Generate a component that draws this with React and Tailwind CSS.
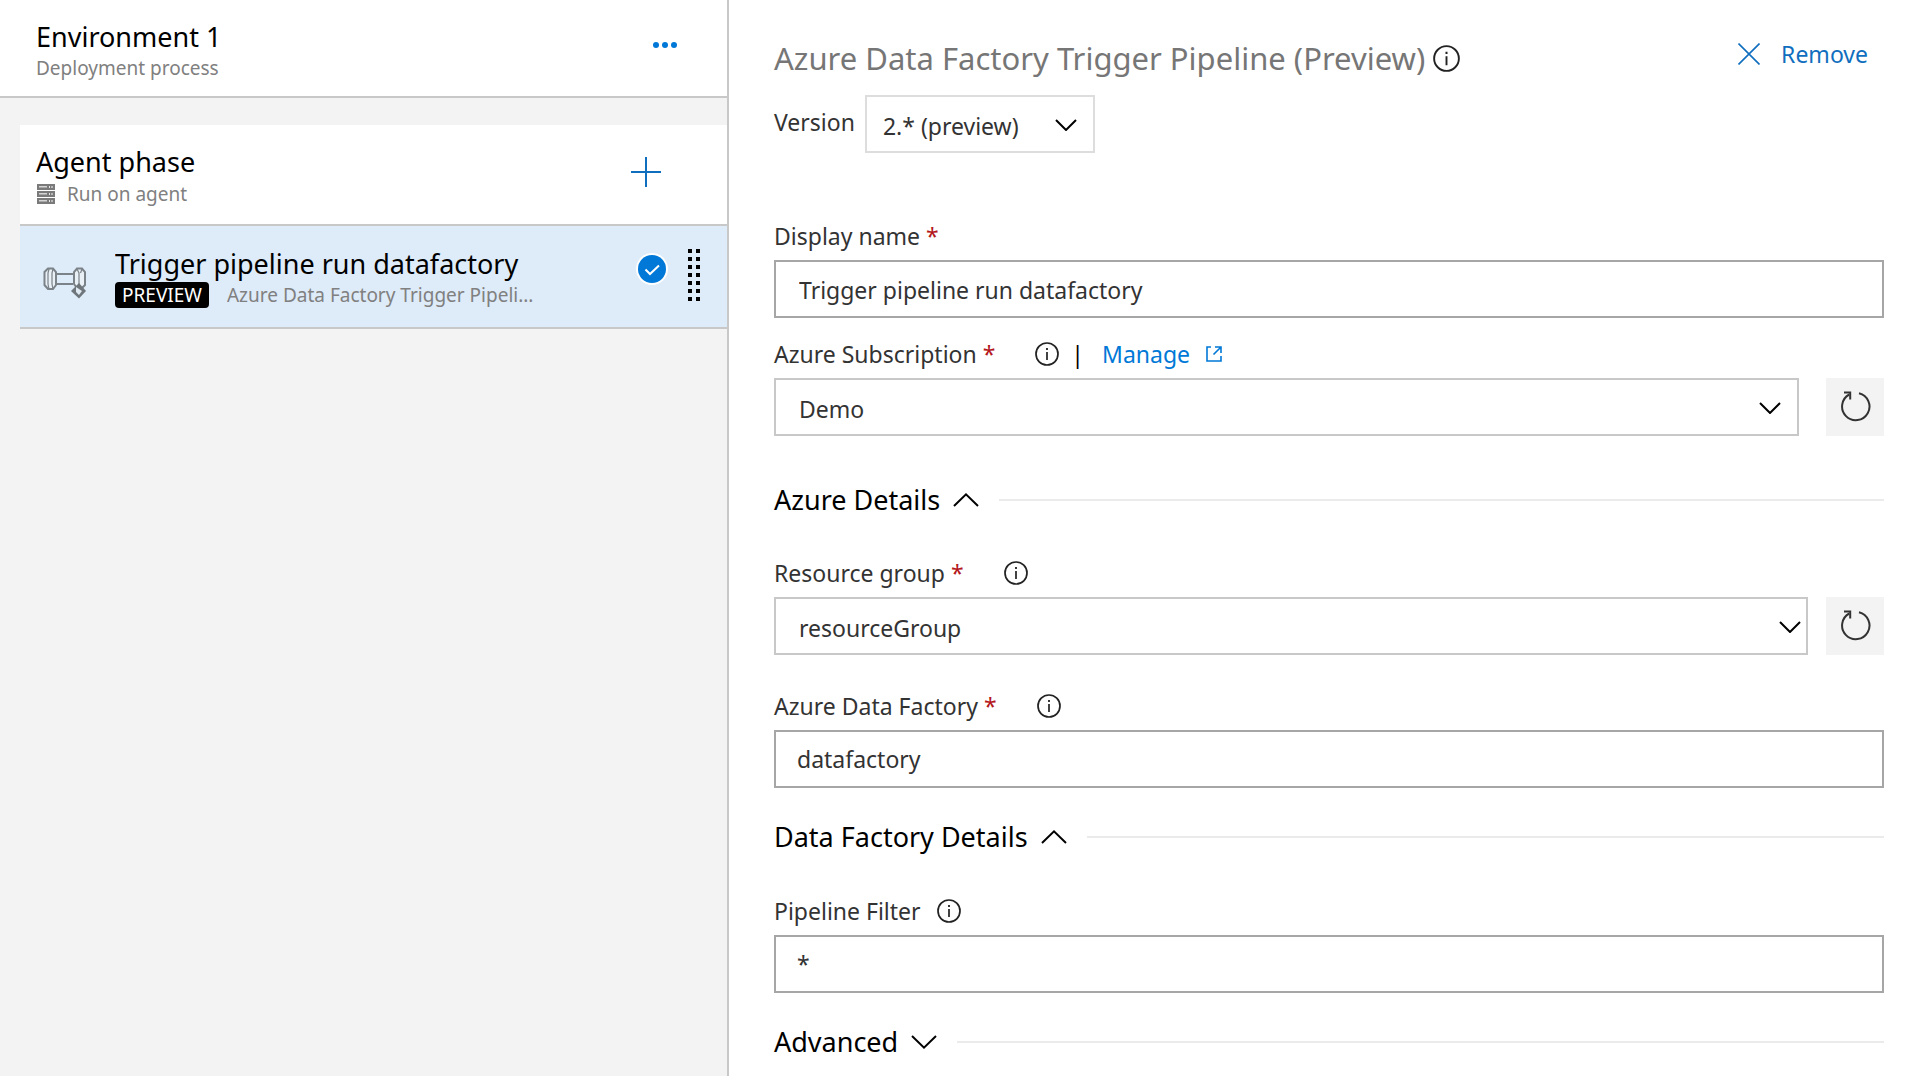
import React, { useState } from "react";

function ChevronDown({ className }) {
  return (
    <svg viewBox="0 0 22 12" fill="none" stroke="currentColor" strokeWidth="2" className={className} aria-hidden="true">
      <path d="M1 1 L11 11 L21 1" />
    </svg>
  );
}

function InfoButton({ label, large }) {
  return (
    <button type="button" aria-label={label} className="shrink-0 text-[#222222]">
      <svg viewBox="0 0 24 24" fill="none" stroke="currentColor" className={large ? "block size-[27px]" : "block size-6"} aria-hidden="true">
        <circle cx="12" cy="12" r="11" strokeWidth="1.7" />
        <path d="M12 10v8" strokeWidth="1.7" />
        <path d="M12 6v2" strokeWidth="1.8" />
      </svg>
    </button>
  );
}

function FieldLabel({ htmlFor, text, required, info, children }) {
  return (
    <div className="mb-2 flex items-center text-[23px] leading-8">
      <label htmlFor={htmlFor}>
        {text}
        {required && <span className="text-[#b4181c]"> *</span>}
      </label>
      {info && (
        <div className={required ? "ml-10 flex" : "ml-4 flex"}>
          <InfoButton label={"About " + text} />
        </div>
      )}
      {children}
    </div>
  );
}

function TextField({ id, value, indented }) {
  const [text, setText] = useState(value);
  return (
    <input
      id={id}
      type="text"
      value={text}
      onChange={(e) => setText(e.target.value)}
      className={
        "block h-[58px] w-full border-2 border-[#a6a6a6] bg-white pr-5 text-[23px] leading-8 text-[#333333] outline-none " +
        (indented ? "pl-[23px] pt-0.5" : "pl-[21px]")
      }
    />
  );
}

function SelectField({ id, value, chevron, tone, className }) {
  return (
    <div className={"relative " + className}>
      <select
        id={id}
        defaultValue={value}
        className={"block h-[58px] w-full appearance-none border-2 bg-white pt-1 text-[23px] leading-8 text-[#333333] outline-none " + tone}
      >
        <option value={value}>{value}</option>
      </select>
      <ChevronDown className={"pointer-events-none absolute top-6 h-3 w-[22px] text-black " + chevron} />
    </div>
  );
}

function RefreshButton({ label }) {
  return (
    <button type="button" aria-label={label} className="flex size-[58px] shrink-0 items-center justify-center bg-[#f3f3f3] text-[#333333]">
      <svg viewBox="0 0 32 32" fill="none" stroke="currentColor" strokeWidth="2" className="size-8" aria-hidden="true">
        <path d="M20 2.200 A13.7 13.7 0 1 1 10.2 3.500" />
        <path d="M5 1.600 H11.2 V8.500" />
      </svg>
    </button>
  );
}

function Section({ title, open }) {
  return (
    <div className="flex items-center">
      <h2>
        <button type="button" aria-expanded={open} className="flex items-center text-[27px] leading-9 text-black">
          {title}
          <svg viewBox="0 0 26 14" fill="none" stroke="currentColor" strokeWidth="2" className="ml-[13px] h-[14px] w-[26px]" aria-hidden="true">
            <path d={open ? "M1 13 L13 1.4 L25 13" : "M1 1 L13 12.6 L25 1"} />
          </svg>
        </button>
      </h2>
      <div className="ml-5 h-0.5 flex-1 bg-[#ebebeb]" />
    </div>
  );
}

function ServerIcon() {
  return (
    <svg viewBox="0 0 18 20" className="h-5 w-[18px] text-[#7a7a7a]" aria-hidden="true">
      {[0, 7, 14].map((y) => (
        <g key={y}>
          <rect x="0" y={y} width="18" height="6" fill="currentColor" />
          <rect x="2" y={y + 2} width="8" height="1.5" fill="#d4d4d4" />
          <rect x="12" y={y + 2} width="1" height="2" fill="#e4e4e4" />
          <rect x="14" y={y + 2} width="2" height="2" fill="#b8b8b8" />
        </g>
      ))}
    </svg>
  );
}

function PipelineIcon() {
  return (
    <svg viewBox="0 0 44 32" fill="none" stroke="#7b8288" strokeWidth="2" className="h-8 w-11" aria-hidden="true">
      <path d="M13 7 H31 M13 17 H30" />
      <path d="M5 1.500 H10 L13 5 V18 L10 22 H5 L1.500 18 V5 Z" fill="#e9f0f6" />
      <path d="M6 2 L5 6 V17 L6 22 M10 2 L9 6 V17 L10 22" strokeWidth="1.2" />
      <path d="M34 1.500 H39 L42 5 V18 L39 21 H34 L31 17 V5 Z" fill="#e9f0f6" />
      <path d="M34 2 L36 6 V17 M39 2 L37.500 6" strokeWidth="1.2" />
      <path d="M36 16 L43 24 L36 31.500 L28 24 Z" fill="#6f767b" stroke="none" />
      <path d="M33 20 L39 24 L36 28 L33 25 Z" fill="#dfe9f2" stroke="none" />
    </svg>
  );
}

function DragHandle() {
  return (
    <button type="button" aria-label="Reorder task" className="grid grid-cols-2 gap-1">
      {Array.from({ length: 14 }, (_, i) => (
        <span key={i} className="size-1 bg-black" />
      ))}
    </button>
  );
}

function Sidebar() {
  return (
    <aside className="border-r-2 border-[#c8c8c8] bg-[#f3f3f3]">
      <header className="flex items-start justify-between border-b-2 border-[#c8c8c8] bg-white pt-[19px] pr-[50px] pb-4 pl-9">
        <div>
          <h1 className="text-[27px] leading-9 text-black">Environment 1</h1>
          <p className="mt-px text-[19px] leading-6 text-[#808080]">Deployment process</p>
        </div>
        <button type="button" aria-label="More actions" className="mt-[23px]">
          <svg viewBox="0 0 24 6" fill="#0078d7" className="block h-1.5 w-6" aria-hidden="true">
            <circle cx="3" cy="3" r="3" />
            <circle cx="12" cy="3" r="3" />
            <circle cx="21" cy="3" r="3" />
          </svg>
        </button>
      </header>

      <div className="mt-[27px] ml-5">
        <section className="flex items-start justify-between border-b-2 border-[#c8c8c8] bg-white pt-[19px] pr-[66px] pb-[18px] pl-4">
          <div>
            <h2 className="text-[27px] leading-9 text-black">Agent phase</h2>
            <p className="mt-0.5 flex items-center gap-3 pl-px text-[19px] leading-6 text-[#808080]">
              <ServerIcon />
              Run on agent
            </p>
          </div>
          <button type="button" aria-label="Add task" className="mt-[13px]">
            <svg viewBox="0 0 30 30" stroke="#106ebe" strokeWidth="2" className="block size-[30px]" aria-hidden="true">
              <path d="M0 15 H30 M15 0 V30" />
            </svg>
          </button>
        </section>

        <section className="flex items-start border-b-2 border-[#c8c8c8] bg-[#deebf8] pt-5 pr-[27px] pb-[19px] pl-[23px]">
          <div className="mt-[21px] shrink-0">
            <PipelineIcon />
          </div>
          <div className="ml-7 min-w-0 flex-1">
            <h3 className="truncate text-[27px] leading-9 text-black">Trigger pipeline run datafactory</h3>
            <div className="flex items-center text-[19px] leading-[26px]">
              <span className="rounded-[4px] bg-black px-[7px] text-white">PREVIEW</span>
              <span className="ml-[18px] truncate text-[#808080]">Azure Data Factory Trigger Pipeli...</span>
            </div>
          </div>
          <svg viewBox="0 0 32 32" className="mt-[7px] size-8 shrink-0" role="img" aria-label="Selected">
            <circle cx="16" cy="16" r="16" fill="#ffffff" />
            <circle cx="16" cy="16" r="14" fill="#0078d7" />
            <path d="M9.500 16.500 L14 21 L23 12.500" fill="none" stroke="#ffffff" strokeWidth="2" />
          </svg>
          <div className="mt-[3px] ml-5 shrink-0">
            <DragHandle />
          </div>
        </section>
      </div>
    </aside>
  );
}

export default function App() {
  return (
    <div className="grid min-h-screen grid-cols-[minmax(0,729fr)_minmax(0,1182fr)] bg-white font-['Noto_Sans',sans-serif] text-[#333333]">
      <Sidebar />

      <main className="pt-[38px] pr-[27px] pb-4 pl-[45px]">
        <div className="flex items-start justify-between">
          <div className="flex items-center gap-2">
            <h1 className="text-[31px] leading-10 text-[#767676]">Azure Data Factory Trigger Pipeline (Preview)</h1>
            <InfoButton label="About this task" large />
          </div>
          <button type="button" className="mr-4 flex items-center gap-[21px] text-[23px] leading-8 text-[#106ebe]">
            <svg viewBox="0 0 22 22" fill="none" stroke="currentColor" strokeWidth="1.6" className="size-[22px]" aria-hidden="true">
              <path d="M0.500 0.500 L21.500 21.500 M21.500 0.500 L0.500 21.500" />
            </svg>
            Remove
          </button>
        </div>

        <div className="mt-[17px] flex items-center gap-2.5">
          <label htmlFor="version" className="pb-1 text-[23px] leading-8">Version</label>
          <SelectField id="version" value="2.* (preview)" tone="border-[#dddddd] pl-4" chevron="right-[18px]" className="w-[230px]" />
        </div>

        <div className="mt-[67px]">
          <FieldLabel htmlFor="display-name" text="Display name" required />
          <TextField id="display-name" value="Trigger pipeline run datafactory" indented />
        </div>

        <div className="mt-5">
          <FieldLabel htmlFor="subscription" text="Azure Subscription" required info>
            <span className="ml-3 text-black">|</span>
            <a href="#manage" className="ml-[18px] flex items-center gap-4 text-[#0078d7]">
              Manage
              <svg viewBox="0 0 16 16" fill="none" stroke="currentColor" strokeWidth="1.6" className="size-4" aria-hidden="true">
                <path d="M5 1 H1 V15 H15 V10" />
                <path d="M9 1 H15 V7 M15 1 L7.500 8.500" />
              </svg>
            </a>
          </FieldLabel>
          <div className="flex gap-[27px]">
            <SelectField id="subscription" value="Demo" tone="border-[#c8c8c8] pl-[23px]" chevron="right-[18px]" className="flex-1" />
            <RefreshButton label="Refresh Azure Subscription" />
          </div>
        </div>

        <div className="mt-[46px]">
          <Section title="Azure Details" open />
        </div>

        <div className="mt-[39px]">
          <FieldLabel htmlFor="resource-group" text="Resource group" required info />
          <div className="flex gap-[18px]">
            <SelectField id="resource-group" value="resourceGroup" tone="border-[#c8c8c8] pl-[23px]" chevron="right-[7px]" className="flex-1" />
            <RefreshButton label="Refresh Resource group" />
          </div>
        </div>

        <div className="mt-[35px]">
          <FieldLabel htmlFor="data-factory" text="Azure Data Factory" required info />
          <TextField id="data-factory" value="datafactory" />
        </div>

        <div className="mt-[31px]">
          <Section title="Data Factory Details" open />
        </div>

        <div className="mt-10">
          <FieldLabel htmlFor="pipeline-filter" text="Pipeline Filter" info />
          <TextField id="pipeline-filter" value="*" />
        </div>

        <div className="mt-[31px]">
          <Section title="Advanced" open={false} />
        </div>
      </main>
    </div>
  );
}
